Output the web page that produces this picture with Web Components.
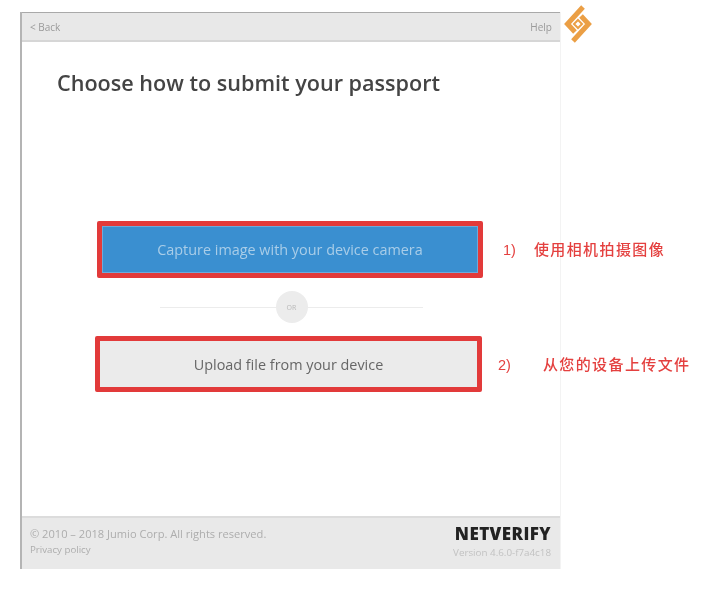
<!DOCTYPE html>
<html>
<head>
<meta charset="utf-8">
<title>Netverify</title>
<style>
  html, body { margin: 0; background: #fff; }
  body { width: 708px; height: 589px; overflow: hidden; font-family: "Open Sans", "Liberation Sans", sans-serif; }
</style>
</head>
<body>
<verify-page>
  <verify-header slot="header"></verify-header>
  <h-title slot="main">Choose how to submit your passport</h-title>
  <choice-button slot="main" kind="primary">Capture image with your device camera</choice-button>
  <or-divider slot="main"></or-divider>
  <choice-button slot="main" kind="secondary">Upload file from your device</choice-button>
  <verify-footer slot="footer"></verify-footer>
  <red-note slot="notes" num="1)" style="left:503px;top:238px" gap="18">使用相机拍摄图像</red-note>
  <red-note slot="notes" num="2)" style="left:498px;top:353px" gap="32">从您的设备上传文件</red-note>
  <brand-mark slot="notes" style="left:562px;top:4px"></brand-mark>
</verify-page>

<script>
const pageTemplate = document.createElement('template');
pageTemplate.innerHTML = `
<style>
  :host{
    display: block;
    position: relative;
    width: 708px;
    height: 589px;
    padding: 12px 0 0 20px;
    box-sizing: border-box;
  }
  .panel{
    width: 541px;
    height: 557px;
    display: flex;
    flex-direction: column;
    box-sizing: border-box;
    border-left: 2px solid #b4b4b4;
    border-right: 1px solid #f3f3f3;
    filter: blur(.7px);
  }
  main{
    flex: 1;
    display: flex;
    flex-direction: column;
  }
</style>
<div class="panel">
  <slot name="header"></slot>
  <main><slot name="main"></slot></main>
  <slot name="footer"></slot>
</div>
<slot name="notes"></slot>
`;

class VerifyPage extends HTMLElement {
  constructor() {
    super();
    this.attachShadow({ mode: 'open' }).appendChild(pageTemplate.content.cloneNode(true));
  }
}

const headerTemplate = document.createElement('template');
headerTemplate.innerHTML = `
<style>
  :host{
    display: flex;
    justify-content: space-between;
    align-items: center;
    height: 30px;
    box-sizing: border-box;
    padding: 0 8px 0 8px;
    background: #e8e8e8;
    border-top: 1px solid #a9a9a9;
    border-bottom: 2px solid #d6d6d6;
    font-size: 10px;
    color: #9a9a9a;
  }
</style>
<span>&lt; Back</span><span>Help</span>
`;

class VerifyHeader extends HTMLElement {
  constructor() {
    super();
    this.attachShadow({ mode: 'open' }).appendChild(headerTemplate.content.cloneNode(true));
  }
}

class HTitle extends HTMLElement {
  constructor() {
    super();
    this.attachShadow({ mode: 'open' }).innerHTML = `
      <style>
        :host{
          display: block;
          margin: 25px 0 0 35px;
          height: 32px;
          font-size: 21.6px;
          line-height: 32px;
          font-weight: 600;
          color: #444;
          white-space: nowrap;
        }
      </style>
      <slot></slot>`;
  }
}

class ChoiceButton extends HTMLElement {
  constructor() {
    super();
    this.attachShadow({ mode: 'open' }).innerHTML = `
      <style>
        :host{
          display: block;
          box-sizing: border-box;
          border: 5px solid #e23a3a;
          border-radius: 2px;
          font-size: 14.4px;
          white-space: nowrap;
        }
        :host([kind="primary"]){
          width: 386px;
          height: 57px;
          margin: 122px 0 0 75px;
        }
        :host([kind="secondary"]){
          width: 387px;
          height: 56px;
          margin: 13px 0 0 73px;
        }
        .face{
          display: flex;
          align-items: center;
          justify-content: center;
          height: 100%;
        }
        :host([kind="primary"]) .face{ background: #3a8fd0; color: #a9cde8; box-shadow: inset 0 0 0 1px rgba(255,255,255,.25); }
        :host([kind="secondary"]) .face{ background: #ebebeb; color: #666; }
      </style>
      <div class="face"><slot></slot></div>`;
  }
}

class OrDivider extends HTMLElement {
  constructor() {
    super();
    this.attachShadow({ mode: 'open' }).innerHTML = `
      <style>
        :host{
          display: flex;
          align-items: center;
          width: 263px;
          height: 32px;
          margin: 13px 0 0 138px;
        }
        .line{ flex: 1; height: 1px; background: #ececec; }
        .dot{
          width: 32px;
          height: 32px;
          border-radius: 50%;
          background: #ececec;
          color: #b9b9b9;
          font-size: 7px;
          display: flex;
          align-items: center;
          justify-content: center;
        }
      </style>
      <div class="line"></div><div class="dot">OR</div><div class="line"></div>`;
  }
}

class VerifyFooter extends HTMLElement {
  constructor() {
    super();
    this.attachShadow({ mode: 'open' }).innerHTML = `
      <style>
        :host{
          display: flex;
          justify-content: space-between;
          height: 53px;
          box-sizing: border-box;
          padding: 7px 9px 0 8px;
          background: #e9e9e9;
          border-top: 2px solid #dcdcdc;
          color: #adadad;
        }
        .legal{ font-size: 11.1px; line-height: 16px; padding-top: 1px; }
        .legal small{ display: block; font-size: 9.7px; }
        .brand{ text-align: right; }
        .name{
          font-size: 17px;
          line-height: 18px;
          font-weight: 800;
          color: #222;
          letter-spacing: .4px;
        }
        .version{ font-size: 9.8px; line-height: 12px; margin-top: 4px; color: #c2c2c2; }
      </style>
      <div class="legal">© 2010 – 2018 Jumio Corp. All rights reserved.<small>Privacy policy</small></div>
      <div class="brand">
        <div class="name">NETVERIFY</div>
        <div class="version">Version 4.6.0-f7a4c18</div>
      </div>`;
  }
}

// red notes were drawn on top of the screenshot, so they sit on the page freely
class RedNote extends HTMLElement {
  constructor() {
    super();
    const gap = this.getAttribute('gap');
    this.attachShadow({ mode: 'open' }).innerHTML = `
      <style>
        :host{
          position: absolute;
          display: flex;
          align-items: baseline;
          height: 20px;
          font-family: "Liberation Sans", "Noto Sans CJK SC", sans-serif;
          font-size: 15px;
          color: #e4403f;
          white-space: nowrap;
          filter: blur(.4px);
        }
        .num{ font-size: 14.5px; margin-right: ${gap}px; }
        .txt{ font-family: "Noto Sans CJK SC", sans-serif; font-weight: 500; letter-spacing: 1.4px; font-size: 15px; }
      </style>
      <span class="num">${this.getAttribute('num')}</span><span class="txt"><slot></slot></span>`;
  }
}

class BrandMark extends HTMLElement {
  constructor() {
    super();
    this.attachShadow({ mode: 'open' }).innerHTML = `
      <style>
        :host{ position: absolute; display: block; width: 32px; height: 40px; }
        svg{ display: block; }
      </style>
      <svg width="32" height="40" viewBox="0 0 32 40" fill="none">
        <path d="M21 3 5.500 20l7.500 8" stroke="#eb9f45" stroke-width="5"/>
        <path d="M11 37 26.500 20l-7.500-8" stroke="#eb9f45" stroke-width="5"/>
        <path d="M16 16 20 20 16 24 12 20z" stroke="#eb9f45" stroke-width="2"/>
      </svg>`;
  }
}

customElements.define('verify-page', VerifyPage);
customElements.define('verify-header', VerifyHeader);
customElements.define('h-title', HTitle);
customElements.define('choice-button', ChoiceButton);
customElements.define('or-divider', OrDivider);
customElements.define('verify-footer', VerifyFooter);
customElements.define('red-note', RedNote);
customElements.define('brand-mark', BrandMark);
</script>
</body>
</html>
